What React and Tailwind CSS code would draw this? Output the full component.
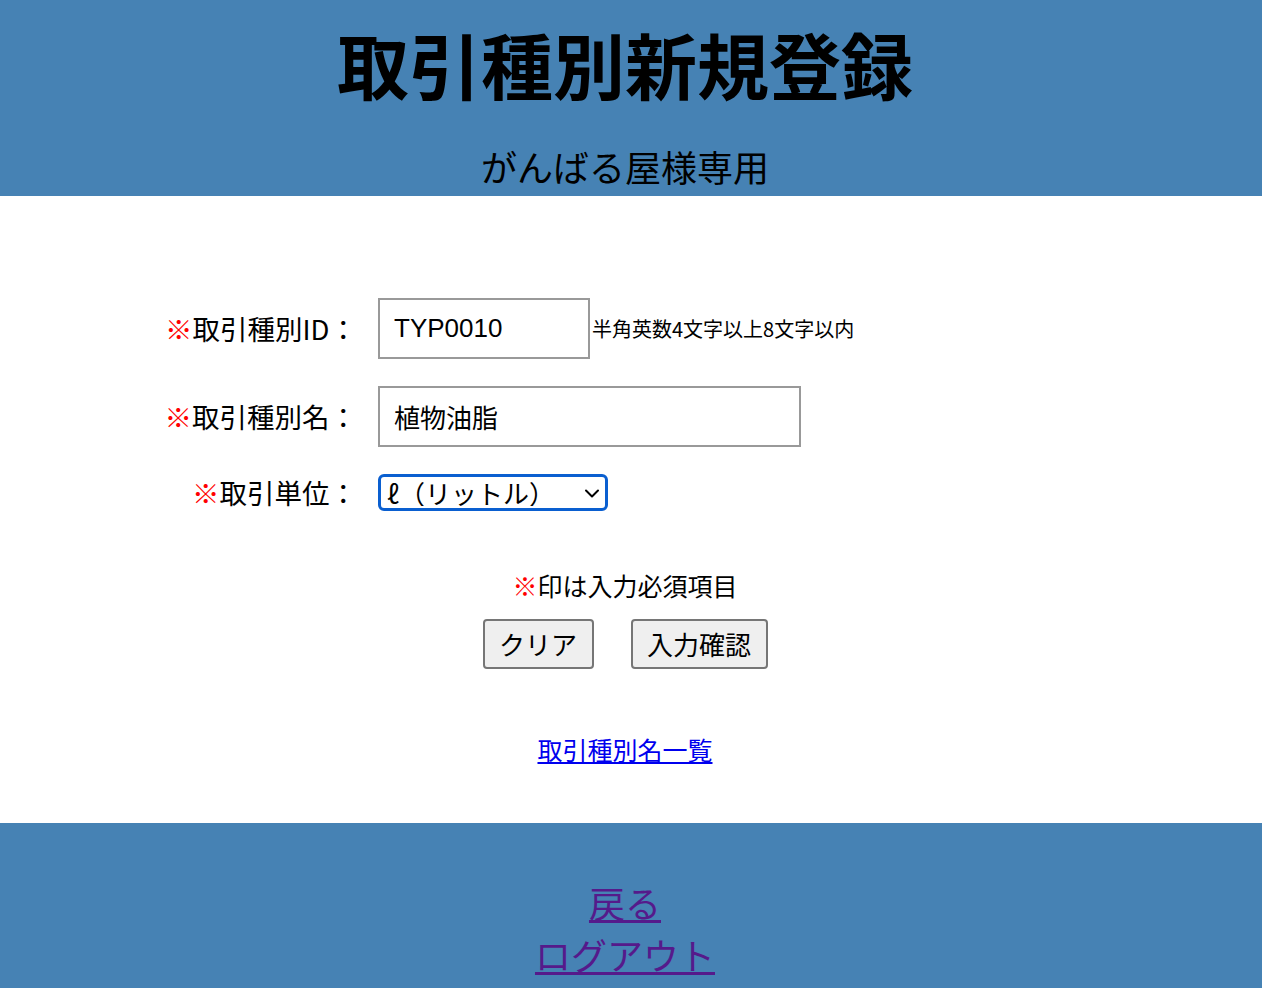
import React, { useState } from "react";

const jp = { fontFamily: '"Noto Sans CJK JP", "Noto Sans", sans-serif' };

const Req = () => <span className="text-[#ff0000]">※</span>;

const App = () => {
  const [typeId, setTypeId] = useState("TYP0010");
  const [typeName, setTypeName] = useState("植物油脂");
  const [unit, setUnit] = useState("l");

  return (
    <div className="min-h-[988px] bg-white text-black" style={jp}>
      {/* Header */}
      <header className="h-[196px] bg-[#4682b4] pr-[12px] flex flex-col items-center">
        <h1 className="mt-[17px] text-[72px] leading-[92px] font-bold">取引種別新規登録</h1>
        <p className="mt-[37px] text-[36px] leading-[40px]">がんばる屋様専用</p>
      </header>

      {/* Form */}
      <main className="pt-[102px] pb-[56px] pr-[12px]">
        <div className="ml-[148px] flex flex-col">
          <div className="flex items-center">
            <label className="w-[209px] text-right text-[27.5px] leading-none">
              <Req />取引種別ID：
            </label>
            <input
              value={typeId}
              onChange={(e) => setTypeId(e.target.value)}
              className="ml-[21px] w-[212px] h-[61px] border-2 border-[#999999] px-[14px] text-[26px] outline-none"
              style={{ fontFamily: '"Liberation Sans", "Noto Sans CJK JP", sans-serif' }}
            />
            <span className="ml-[2px] text-[20px] leading-none">半角英数4文字以上8文字以内</span>
          </div>

          <div className="mt-[27px] flex items-center">
            <label className="w-[209px] text-right text-[27.5px] leading-none">
              <Req />取引種別名：
            </label>
            <input
              value={typeName}
              onChange={(e) => setTypeName(e.target.value)}
              className="ml-[21px] w-[423px] h-[61px] border-2 border-[#999999] px-[14px] text-[26px] outline-none"
              style={jp}
            />
          </div>

          <div className="mt-[27px] flex items-center">
            <label className="w-[209px] text-right text-[27.5px] leading-none">
              <Req />取引単位：
            </label>
            <div className="ml-[21px] relative w-[230px] h-[37px]">
              <select
                value={unit}
                onChange={(e) => setUnit(e.target.value)}
                className="appearance-none block w-full h-full border-[3px] border-[#0a5fd0] rounded-[6px] pl-[6px] pr-[30px] text-[26px] leading-none bg-white outline-none"
                style={jp}
              >
                <option value="l">ℓ（リットル）</option>
                <option value="kg">kg（キログラム）</option>
                <option value="t">t（トン）</option>
              </select>
              <svg
                className="absolute right-[7px] top-1/2 -translate-y-1/2 pointer-events-none"
                width="18"
                height="18"
                viewBox="0 0 18 18"
                fill="none"
                stroke="#000"
                strokeWidth="2"
                strokeLinecap="round"
                strokeLinejoin="round"
              >
                <path d="M3 6.5l6 6 6-6" />
              </svg>
            </div>
          </div>
        </div>

        <p className="mt-[56px] text-center text-[25px] leading-[36px]">
          <Req />印は入力必須項目
        </p>

        <div className="mt-[16px] flex justify-center gap-[37px]">
          <button
            type="button"
            className="w-[111px] h-[50px] bg-[#efefef] border-2 border-[#767676] rounded-[4px] text-[26px] leading-none"
          >
            クリア
          </button>
          <button
            type="button"
            className="w-[137px] h-[50px] bg-[#efefef] border-2 border-[#767676] rounded-[4px] text-[26px] leading-none"
          >
            入力確認
          </button>
        </div>

        <div className="mt-[62px] text-center text-[25px] leading-[36px]">
          <a href="#list" className="text-[#0000ee] underline">
            取引種別名一覧
          </a>
        </div>
      </main>

      {/* Footer */}
      <footer className="bg-[#4682b4] min-h-[172px] pt-[53px] pr-[12px] flex flex-col items-center text-[36px] leading-[52px]">
        <a href="#back" className="text-[#551a8b] underline">
          戻る
        </a>
        <a href="#logout" className="text-[#551a8b] underline">
          ログアウト
        </a>
      </footer>
    </div>
  );
};

export default App;
